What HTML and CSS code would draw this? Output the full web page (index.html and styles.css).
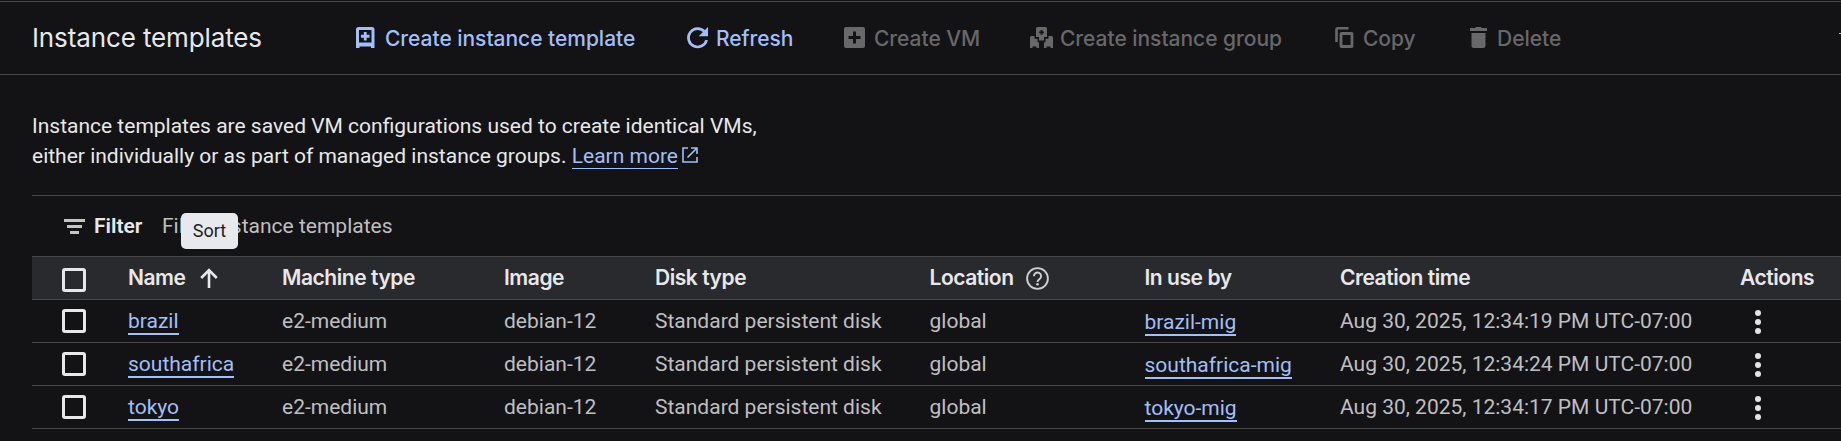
FILE: index.html
```html
<!DOCTYPE html>
<html lang="en">
<head>
<meta charset="utf-8">
<title>Instance templates</title>
<link rel="stylesheet" href="styles.css">
</head>
<body>
<header class="toolbar">
  <h1 class="title">Instance templates</h1>
  <nav class="actions">
    <a class="btn primary"><svg class="ico" viewBox="0 0 24 24"><path fill="currentColor" fill-rule="evenodd" d="M3.500 0h13.500a2.500 2.500 0 0 1 2.500 2.500V21h-3.500v-1.500H4.500V21H1V2.500A2.500 2.500 0 0 1 3.500 0zM4 3v12.500h12.500V3z"/><path stroke="currentColor" stroke-width="2.800" d="M10.250 5v8.500M6 9.250h8.500"/></svg><span>Create instance template</span></a>
    <a class="btn primary"><svg class="ico" viewBox="0 0 24 24"><path fill="none" stroke="currentColor" stroke-width="2.700" d="M18.600 4.700A9.200 9.200 0 1 0 20.600 13"/><path fill="currentColor" d="M22 0v9.300h-9.300z"/></svg><span>Refresh</span></a>
    <a class="btn"><svg class="ico" viewBox="0 0 24 24"><path fill="currentColor" fill-rule="evenodd" d="M2 0h17a2 2 0 0 1 2 2v17a2 2 0 0 1-2 2H2a2 2 0 0 1-2-2V2a2 2 0 0 1 2-2zM9 4.500V9H4.500v3H9v4.500h3V12h4.500V9H12V4.500z"/></svg><span>Create VM</span></a>
    <a class="btn"><svg class="ico" viewBox="0 0 24 24"><path fill="currentColor" fill-rule="evenodd" d="M7.500 0h8A1.500 1.500 0 0 1 17 1.500V10h-3v3.500H9V10H6V1.500A1.500 1.500 0 0 1 7.500 0zM10.600 3v1.400H9.200v1.900h1.400v1.400h1.900V6.300h1.400V4.400h-1.400V3z"/><path fill="currentColor" d="M0 10.500A1.500 1.500 0 0 1 1.500 9H4.500v2.800h3v3.400H9V21H6.500v-1.500h-4V21H0zM23 10.500A1.500 1.500 0 0 0 21.500 9H18.500v2.800h-3v3.400H14V21h2.500v-1.500h4V21H23z"/></svg><span>Create instance group</span></a>
    <a class="btn"><svg class="ico" viewBox="0 0 24 24"><path fill="none" stroke="currentColor" stroke-width="2.600" d="M15.500 1.300h-10.500a1.500 1.500 0 0 0-1.500 1.500V15"/><rect x="8" y="6.500" width="11" height="13" rx=".5" fill="none" stroke="currentColor" stroke-width="2.800"/></svg><span>Copy</span></a>
    <a class="btn"><svg class="ico" viewBox="0 0 24 24"><path fill="currentColor" d="M3 1h5l1-1h5l1 1h5v3H3zM4.500 6h14v12.500A2.500 2.500 0 0 1 16 21H7a2.500 2.500 0 0 1-2.500-2.500z"/></svg><span>Delete</span></a>
  </nav>
  <span class="edge"></span>
</header>
<main class="content">
  <p class="intro">Instance templates are saved VM configurations used to create identical VMs,<br>either individually or as part of managed instance groups. <a class="learn">Learn more</a><svg class="ext" viewBox="0 0 16 16"><path fill="none" stroke="currentColor" stroke-width="1.600" d="M6 1H1v14h14v-5M9 1h6v6M15 1 5.500 10.500"/></svg></p>
  <div class="filter">
    <svg class="fico" viewBox="0 0 21 15"><path fill="#c4c4c7" d="M0 0h21v3H0zM3 6h15v3H3zM6 12h9v3H6z"/></svg>
    <b class="flabel">Filter</b>
    <span class="fhint">Filter instance templates</span>
    <span class="tip">Sort</span>
  </div>
  <section class="table">
    <div class="row head">
      <i class="box"></i>
      <span class="name">Name<svg class="arrow" viewBox="0 0 18 20"><path fill="none" stroke="currentColor" stroke-width="2.600" d="M9 20V2.500M1.200 10 9 2l7.800 8"/></svg></span>
      <span>Machine type</span><span>Image</span><span>Disk type</span>
      <span class="name">Location<svg class="help" viewBox="0 0 23 23"><circle cx="11.500" cy="11.500" r="10.400" fill="none" stroke="currentColor" stroke-width="1.900"/><path fill="none" stroke="currentColor" stroke-width="1.900" d="M7.900 9.300a3.600 3.600 0 1 1 5.700 2.800c-1.300.9-2.100 1.500-2.100 3"/><circle cx="11.500" cy="17.300" r="1.300" fill="currentColor"/></svg></span>
      <span>In use by</span><span>Creation time</span><span>Actions</span>
    </div>
    <div class="row"><i class="box"></i><span><a class="link">brazil</a></span><span>e2-medium</span><span>debian-12</span><span>Standard persistent disk</span><span>global</span><span class="mig"><a class="link">brazil-mig</a></span><span>Aug 30, 2025, 12:34:19 PM UTC-07:00</span><svg class="dots" viewBox="0 0 6 24"><circle cx="3" cy="3" r="3"/><circle cx="3" cy="12" r="3"/><circle cx="3" cy="21" r="3"/></svg></div>
    <div class="row"><i class="box"></i><span><a class="link">southafrica</a></span><span>e2-medium</span><span>debian-12</span><span>Standard persistent disk</span><span>global</span><span class="mig"><a class="link">southafrica-mig</a></span><span>Aug 30, 2025, 12:34:24 PM UTC-07:00</span><svg class="dots" viewBox="0 0 6 24"><circle cx="3" cy="3" r="3"/><circle cx="3" cy="12" r="3"/><circle cx="3" cy="21" r="3"/></svg></div>
    <div class="row"><i class="box"></i><span><a class="link">tokyo</a></span><span>e2-medium</span><span>debian-12</span><span>Standard persistent disk</span><span>global</span><span class="mig"><a class="link">tokyo-mig</a></span><span>Aug 30, 2025, 12:34:17 PM UTC-07:00</span><svg class="dots" viewBox="0 0 6 24"><circle cx="3" cy="3" r="3"/><circle cx="3" cy="12" r="3"/><circle cx="3" cy="21" r="3"/></svg></div>
  </section>
</main>
</body>
</html>
```

FILE: styles.css
```css
* { box-sizing: border-box; }
body {
  margin: 0;
  height: 441px;
  overflow: hidden;
  padding-top: 1px;
  background: #131315;
  color: #bfbfc2;
  font: 400 21px/26px Roboto, sans-serif;
}
svg { display: block; flex: none; }
.toolbar {
  height: 74px;
  border-top: 1px solid #47474a;
  border-bottom: 1px solid #47474a;
  display: flex;
  align-items: flex-start;
  padding-left: 32px;
}
.title {
  margin: 19px 0 0;
  width: 323px;
  font: 400 26px/34px Inter, sans-serif;
  letter-spacing: -0.12px;
  color: #e8e8ea;
}
.actions {
  display: grid;
  grid-template-columns: 331px 158px 186px 303px 134px 150px;
  flex: 1;
}
.btn {
  display: flex;
  padding-top: 25px;
  color: #68686b;
  font: 500 21px/24px Inter, sans-serif;
  letter-spacing: -0.03px;
  white-space: nowrap;
}
.btn.primary { color: #a1bff8; }
.ico { width: 24px; height: 24px; margin-right: 6px; }
.edge { width: 2px; height: 1px; margin-top: 31px; background: #a1bff8; }
.content { padding-left: 32px; }
.intro {
  margin: 0;
  height: 120px;
  padding-top: 36px;
  line-height: 30px;
  color: #e8e8ea;
}
.learn { color: #a1bff8; border-bottom: 1px solid #a1bff8; }
.ext { display: inline-block; width: 16px; height: 16px; margin-left: 4px; color: #a1bff8; }
.filter {
  position: relative;
  height: 61px;
  border-top: 1px solid #47474a;
  display: flex;
  align-items: center;
  padding-left: 32px;
}
.fico { width: 21px; height: 15px; }
.flabel { margin-left: 9px; width: 68px; font-weight: 600; color: #e8e8ea; }
.tip {
  position: absolute;
  left: 149px;
  top: 17px;
  width: 57px;
  height: 36px;
  border-radius: 5px;
  background: #e8e9ed;
  color: #1d1d20;
  font-size: 18px;
  line-height: 35px;
  text-align: center;
}
.row {
  display: grid;
  grid-template-columns: 96px 154px 222px 151px 274.500px 215px 195.500px 400px 84px;
  height: 43px;
  border-bottom: 1px solid #47474a;
  align-items: center;
  white-space: nowrap;
}
.head {
  height: 44px;
  border-top: 1px solid #47474a;
  background: #292a2e;
  color: #e8e8ea;
  font: 600 21px/26px Inter, sans-serif;
  letter-spacing: -0.45px;
}
.name { display: flex; align-items: center; }
.arrow { width: 18px; height: 20px; margin-left: 14px; }
.help { width: 23px; height: 23px; margin-left: 12px; color: #cfcfd2; }
.box {
  width: 24px;
  height: 24px;
  margin-left: 30px;
  border: 3px solid #e8e8ea;
  border-radius: 3px;
}
.head .box { margin-top: 4px; }
.link { color: #a1bff8; border-bottom: 2px solid #a1bff8; }
.mig { padding-top: 2px; }
.dots { width: 6px; height: 24px; margin-top: 2px; margin-left: 15px; fill: #e3e3e6; }
```
